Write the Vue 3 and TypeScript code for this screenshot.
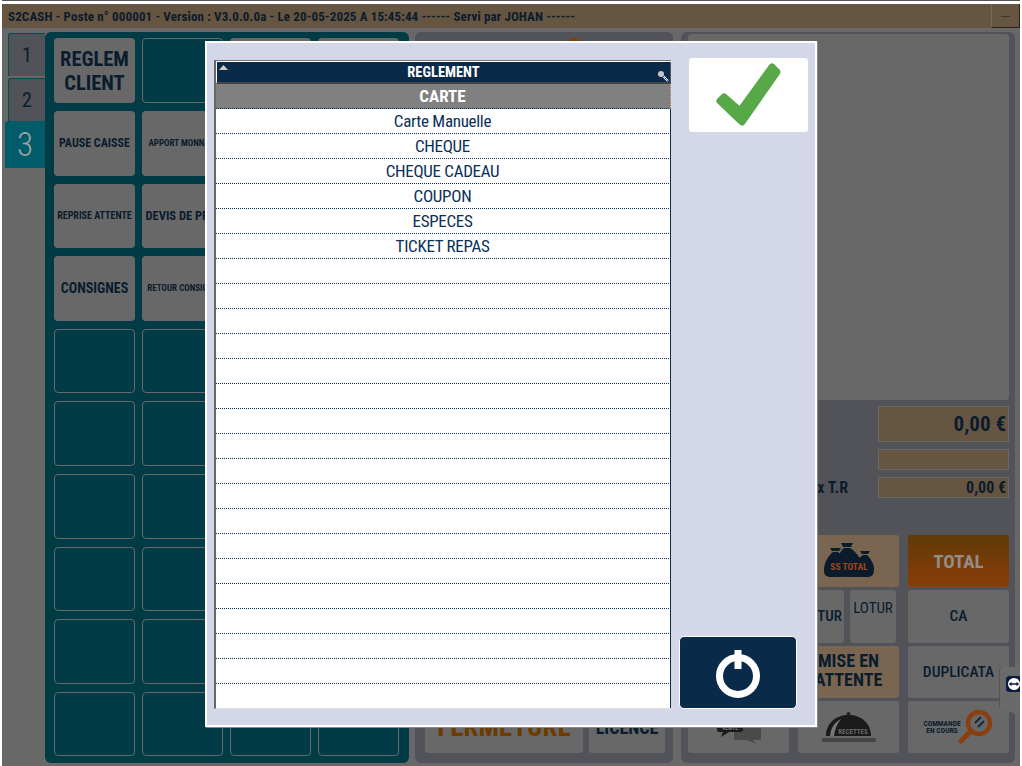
<script setup lang="ts">
const keys = [
  { label: 'REGLEM CLIENT', size: 'xl' },
  { label: '', size: '' },
  { label: 'FIDELITE', size: 'hide' },
  { label: 'AVOIR', size: 'hide' },
  { label: 'PAUSE CAISSE', size: 'md' },
  { label: 'APPORT MONNAIE', size: 'xs' },
  { label: 'RETRAIT', size: 'xs' },
  { label: 'ACOMPTE', size: 'xs' },
  { label: 'REPRISE ATTENTE', size: 'sm' },
  { label: 'DEVIS DE PRIX', size: 'lg' },
  { label: 'TICKET', size: 'sm' },
  { label: 'FACTURE', size: 'sm' },
  { label: 'CONSIGNES', size: 'lg2' },
  { label: 'RETOUR CONSIGNE', size: 'xs' },
  { label: 'CLIENT', size: 'sm' },
  { label: 'STOCK', size: 'sm' },
]
const emptyKeys = 24

const payments = ['Carte Manuelle', 'CHEQUE', 'CHEQUE CADEAU', 'COUPON', 'ESPECES', 'TICKET REPAS']
const rows = [...payments, ...Array(19).fill('')]
</script>

<template>
  <div class="app">
    <div class="topline"></div>
    <header class="titlebar">
      <span class="title">S2CASH - Poste n° 000001 - Version : V3.0.0.0a - Le 20-05-2025 A 15:45:44 ------ Servi par JOHAN ------</span>
      <button class="min">—</button>
    </header>

    <main class="main">
      <nav class="tabs">
        <div class="tab">1</div>
        <div class="tab">2</div>
        <div class="tab active">3</div>
      </nav>

      <section class="keypad">
        <div v-for="k in keys" :key="k.label + k.size" class="key" :class="[k.size, { empty: !k.label }]">
          <span v-if="k.size !== 'hide'">{{ k.label }}</span>
        </div>
        <div v-for="n in emptyKeys" :key="n" class="key empty"></div>
      </section>

      <section class="middle">
        <div class="dome"></div>
        <div class="mid-actions">
          <div class="btn fermeture">FERMETURE</div>
          <div class="btn licence">LICENCE</div>
        </div>
      </section>

      <section class="right">
        <div class="screen"></div>
        <div class="totals">
          <div class="field big">0,00 €</div>
          <div class="field small"></div>
          <div class="total-row">
            <span class="total-label">Max T.R</span>
            <div class="field small">0,00 €</div>
          </div>
        </div>
        <div class="actions">
          <div class="btn"></div>
          <div class="btn peach">
            <svg width="52" height="36" viewBox="0 0 52 36">
              <g fill="#0a1c2c">
                <path d="M7 5h11l-2 3h-7z" />
                <path d="M10 9h5c4 3 9 9 9 17 0 6-3 8-8 8H8c-5 0-7-2-7-7 0-8 5-15 9-18z" />
                <path d="M37 8h10l-2 3h-6z" />
                <path d="M40 12h4c3 3 7 8 7 14 0 6-2 8-7 8h-8c-4 0-7-2-7-8 0-6 7-11 11-14z" />
                <path d="M18 0h12l-2 4h-8z" />
                <path d="M21 5h6c5 3 12 10 12 20 0 6-3 9-8 9H22c-5 0-8-3-8-9 0-10 3-17 7-20z" />
              </g>
              <text x="26" y="27" text-anchor="middle" class="bag-text">SS TOTAL</text>
            </svg>
          </div>
          <div class="btn total">TOTAL</div>

          <div class="btn"></div>
          <div class="split">
            <div class="btn mini tur">CLOTUR</div>
            <div class="btn mini lotur">LOTUR</div>
          </div>
          <div class="btn label">CA</div>

          <div class="btn"></div>
          <div class="btn peach attente">MISE EN<br />ATTENTE</div>
          <div class="btn label">DUPLICATA</div>

          <div class="btn">
            <svg width="46" height="34" viewBox="0 0 46 34">
              <path d="M20 12h23c1 0 2 1 2 2v14c0 1-1 2-2 2h-6l3 4-9-4H20c-1 0-2-1-2-2V14c0-1 1-2 2-2z" fill="#4a4a4a" />
              <path d="M3 5h22c1 0 2 1 2 2v13c0 1-2 2-3 2H13l-8 5 2-5H3c-1 0-2-1-2-2V7c0-1 1-2 2-2z" fill="#1a1a1a" />
              <text x="14" y="20" text-anchor="middle" class="vente-text">VENTE</text>
            </svg>
          </div>
          <div class="btn">
            <svg width="54" height="32" viewBox="0 0 54 32">
              <circle cx="26.500" cy="3" r="2" fill="#222" />
              <path d="M4 25C4 12 14 4 26.500 4S49 12 49 25z" fill="#1a1a1a" />
              <path d="M8 25C9 16 13 11 19 8 15 13 13 18 12 25z" fill="#777" />
              <rect y="27" width="54" height="4" rx="1.500" fill="#444" />
              <text x="31" y="23" text-anchor="middle" class="cloche-text">RECETTES</text>
            </svg>
          </div>
          <div class="btn commande">
            <span class="cmd-text">COMMANDE<br />EN COURS</span>
            <svg width="36" height="36" viewBox="0 0 36 36">
              <circle cx="21" cy="14" r="11" fill="none" stroke="#8a3f12" stroke-width="4.500" />
              <path d="M13 22 3 32" stroke="#8a3f12" stroke-width="5" stroke-linecap="round" />
              <path d="M17 14l6-6M20 18l6-6" stroke="#14283c" stroke-width="2" />
            </svg>
          </div>
        </div>
      </section>
    </main>

    <aside class="remote">
      <svg width="16" height="16" viewBox="0 0 16 16">
        <rect width="16" height="16" rx="3.500" fill="#0b1b40" />
        <circle cx="8" cy="8" r="6" fill="#fff" />
        <path d="M2.800 8 5.500 5.800v1.400h5V5.800L13.200 8l-2.700 2.200V8.800h-5v1.400z" fill="#0b1b40" />
      </svg>
    </aside>

    <div class="modal">
      <div class="list">
        <div class="list-head">
          <svg class="sort" width="9" height="5" viewBox="0 0 9 5"><path d="M4.500 0 9 5H0z" fill="#ccc" /></svg>
          <span>REGLEMENT</span>
          <svg class="search" width="12" height="12" viewBox="0 0 12 12">
            <path d="M6 6l5 5" stroke="#fff" stroke-width="2" />
            <path d="M6 6l5 5" stroke="#11f" stroke-width="1" stroke-dasharray="1.500 1" />
            <circle cx="4" cy="4" r="3" fill="#c4c4c4" />
          </svg>
        </div>
        <div class="list-row selected">CARTE</div>
        <div v-for="(row, i) in rows" :key="i" class="list-row">{{ row }}</div>
      </div>
      <div class="modal-side">
        <button class="ok">
          <svg width="119" height="74" viewBox="0 0 119 74">
            <path d="M83 9 88 14 53 64 31 43 35 39 51 53z" fill="#57a846" stroke="#57a846" stroke-width="7" stroke-linejoin="round" />
          </svg>
        </button>
        <button class="power">
          <svg width="50" height="50" viewBox="0 0 50 50">
            <circle cx="25" cy="28" r="18.500" fill="none" stroke="#fff" stroke-width="7" />
            <rect x="21.500" y="2" width="7" height="19" fill="#fff" />
          </svg>
        </button>
      </div>
    </div>
  </div>
</template>

<style scoped>
.app {
  position: relative;
  width: 1022px;
  height: 766px;
  box-sizing: border-box;
  border-left: 2px solid #fff;
  border-right: 2px solid #fff;
  background: #686868;
  overflow: hidden;
  font-family: Roboto, "Liberation Sans", sans-serif;
  font-stretch: 75%;
  color: #0a1c2e;
}

.topline {
  height: 1px;
  background: #555;
  border-bottom: 3px solid #fff;
  margin: 0 -2px;
}

.titlebar {
  height: 24px;
  display: flex;
  align-items: center;
  justify-content: space-between;
  background: #665540;
  padding-left: 6px;
}

.title {
  font-size: 13px;
  font-weight: 700;
  letter-spacing: 0.13px;
  white-space: nowrap;
}

.min {
  width: 29px;
  height: 24px;
  padding: 0;
  background: #665540;
  border: 0;
  border-left: 1px solid #7a6a55;
  border-right: 1px solid #2c2418;
  border-bottom: 1px solid #2c2418;
  font-size: 9px;
  color: #222;
}

.main {
  display: flex;
  padding-top: 4px;
}

.tabs {
  width: 43px;
  display: flex;
  flex-direction: column;
  align-items: flex-end;
  padding-top: 1px;
}

.tab {
  width: 37px;
  height: 43px;
  box-sizing: border-box;
  margin-bottom: 2px;
  display: flex;
  align-items: center;
  justify-content: center;
  background: #525259;
  border-top: 1px solid #004b55;
  border-left: 1px solid #004b55;
  border-radius: 3px 0 0 0;
  font-size: 20px;
  font-weight: 400;
}

.tab.active {
  width: 40px;
  height: 47px;
  margin-top: -2px;
  background: #005c68;
  border: 0;
  font-size: 33px;
  font-weight: 300;
  color: #9aa2a6;
}

.keypad {
  width: 364px;
  height: 731px;
  box-sizing: border-box;
  padding: 6.300px 10px 6.700px 9px;
  display: grid;
  grid-template-columns: repeat(4, 81px);
  grid-template-rows: repeat(10, 1fr);
  gap: 8px 7px;
  background: #003b46;
  border-radius: 6px;
}

.key {
  display: flex;
  align-items: center;
  justify-content: center;
  text-align: center;
  white-space: nowrap;
  background: #686868;
  border-radius: 4px;
  font-weight: 700;
  overflow: hidden;
}

.key.empty {
  background: transparent;
  border: 1px solid #686868;
}

.key.hide {
  background: #686868;
}

.xl {
  font-size: 20.500px;
  line-height: 24px;
  white-space: normal;
}

.lg {
  font-size: 12.500px;
}

.lg2 {
  font-size: 14px;
}

.md {
  font-size: 12px;
}

.sm {
  font-size: 10px;
}

.xs {
  font-size: 9px;
}

.middle {
  position: relative;
  width: 258px;
  height: 731px;
  margin-left: 6px;
  box-sizing: border-box;
  padding: 0 8px 10px 10px;
  display: flex;
  flex-direction: column;
  justify-content: flex-end;
  background: #525259;
  border-radius: 6px;
  overflow: hidden;
}

.dome {
  position: absolute;
  top: 6px;
  left: 150px;
  width: 18px;
  height: 18px;
  border-radius: 50%;
  background: #7a4208;
}

.mid-actions {
  display: flex;
  gap: 6px;
  height: 52px;
}

.btn {
  display: flex;
  align-items: center;
  justify-content: center;
  background: #686868;
  border-radius: 3px;
  text-align: center;
  white-space: nowrap;
}

.fermeture {
  width: 158px;
  font-size: 27px;
  font-weight: 700;
  color: #6b3b00;
}

.licence {
  width: 76px;
  font-size: 18px;
  font-weight: 700;
}

.right {
  width: 334px;
  height: 731px;
  margin-left: 8px;
  box-sizing: border-box;
  padding: 2px 6px 10px 7px;
  display: flex;
  flex-direction: column;
  background: #525259;
  border-radius: 6px;
}

.screen {
  height: 366px;
  background: #686868;
  border-radius: 4px;
}

.totals {
  margin-top: 6px;
  display: flex;
  flex-direction: column;
  align-items: flex-end;
  gap: 7px;
}

.field {
  width: 131px;
  box-sizing: border-box;
  display: flex;
  align-items: center;
  justify-content: flex-end;
  background: #665540;
  border: 1px solid #686868;
  padding-right: 2px;
  font-weight: 700;
}

.field.big {
  height: 36px;
  font-size: 21px;
}

.field.small {
  height: 21px;
  font-size: 16px;
}

.total-row {
  display: flex;
  align-items: center;
  gap: 30px;
}

.total-label {
  font-size: 16px;
  font-weight: 700;
}

.actions {
  margin-top: auto;
  height: 218px;
  display: grid;
  grid-template-columns: repeat(3, 101px);
  grid-template-rows: repeat(4, 1fr);
  gap: 3px 9px;
}

.peach {
  background: #7a6650;
}

.bag-text {
  font-size: 9.500px;
  font-weight: 700;
  fill: #a0441a;
}

.vente-text {
  font-size: 6px;
  font-weight: 700;
  fill: #777;
}

.total {
  background: linear-gradient(#5f3a08, #8a3d08);
  font-size: 19px;
  font-weight: 700;
  color: #948d86;
}

.split {
  display: flex;
  gap: 6px;
}

.mini {
  width: 46px;
  font-size: 15px;
  font-weight: 500;
}

.tur {
  justify-content: flex-end;
  padding-right: 2px;
  box-sizing: border-box;
}

.lotur {
  align-items: flex-start;
  padding-top: 9px;
  font-weight: 400;
}

.label {
  font-size: 15.500px;
  font-weight: 500;
}

.attente {
  padding-bottom: 3px;
  box-sizing: border-box;
  font-size: 18px;
  font-weight: 700;
  line-height: 19px;
}

.cloche-text {
  font-size: 7px;
  font-weight: 700;
  fill: #666;
}

.commande {
  gap: 0;
}

.commande svg {
  margin-left: -3px;
}

.cmd-text {
  font-size: 7.500px;
  font-weight: 700;
  line-height: 7px;
}

.remote {
  position: absolute;
  top: 667px;
  right: -2px;
  width: 23px;
  height: 50px;
  box-sizing: border-box;
  padding: 9px 0 0 6px;
  background: #6a6a6a;
  border-left: 1px solid #555;
  border-radius: 4px 0 0 0;
  clip-path: polygon(0 0, 100% 0, 100% 100%, 0 80%);
}

.modal {
  position: absolute;
  left: 203px;
  top: 41px;
  width: 612px;
  height: 686px;
  box-sizing: border-box;
  padding: 17px 0 16px 7px;
  display: flex;
  background: #d4d7e8;
  border: 2px solid #fff;
  box-shadow: 1px 1px 0 #888;
}

.list {
  width: 457px;
  height: 100%;
  box-sizing: border-box;
  background: #fff;
  border-left: 2px solid #666;
  border-top: 1px solid #777;
  border-bottom: 1px solid #ddd;
  overflow: hidden;
}

.list-head {
  position: relative;
  height: 22px;
  margin-top: 1px;
  box-sizing: border-box;
  display: flex;
  align-items: center;
  justify-content: center;
  background: #092a48;
  border-left: 1px solid #fff;
  border-bottom: 2px solid #444;
  border-right: 1px solid #555;
  color: #fff;
  font-size: 14.500px;
  font-weight: 700;
}

.sort {
  position: absolute;
  left: 2px;
  top: 3px;
}

.search {
  position: absolute;
  right: 1px;
  bottom: 0;
}

.list-row {
  height: 25px;
  box-sizing: border-box;
  display: flex;
  align-items: center;
  justify-content: center;
  padding-right: 1px;
  border-bottom: 1px dotted #0b2e50;
  border-right: 1px solid #0b2e50;
  font-size: 17px;
  letter-spacing: -0.3px;
  color: #0a3058;
}

.list-row.selected {
  background: #808080;
  border-right: 1px dotted #e8b078;
  color: #fff;
  font-size: 17px;
  font-weight: 700;
  letter-spacing: 0;
}

.modal-side {
  flex: 1;
  display: flex;
  flex-direction: column;
  justify-content: space-between;
  padding-left: 8px;
  margin-top: -2px;
}

.ok {
  width: 119px;
  height: 74px;
  margin-left: 10px;
  padding: 0;
  border: 0;
  border-radius: 3px;
  background: #fff;
}

.power {
  width: 118px;
  height: 73px;
  padding: 0;
  display: flex;
  align-items: center;
  justify-content: center;
  background: #092a48;
  border: 1px solid #fff;
  border-radius: 5px;
}
</style>

<style>
body {
  margin: 0;
}
</style>
